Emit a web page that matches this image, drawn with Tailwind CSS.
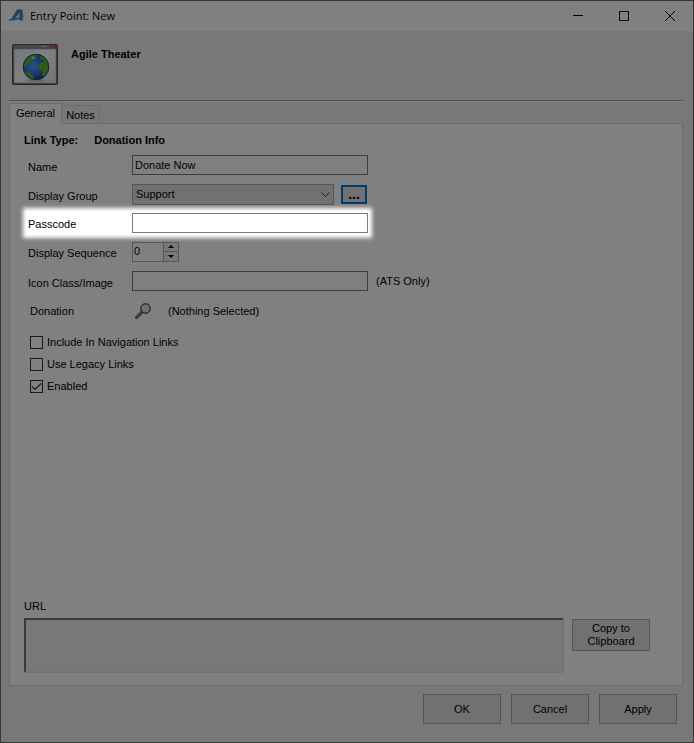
<!DOCTYPE html>
<html lang="en">
<head>
  <meta charset="UTF-8" />
  <meta name="viewport" content="width=device-width, initial-scale=1.0" />
  <title>Entry Point: New</title>

  <!-- Tailwind CSS -->
  <script src="https://cdn.jsdelivr.net/npm/@tailwindcss/browser@4"></script>
</head>
<body class="min-h-screen flex flex-col bg-[#787878] border border-[#353535] text-black text-[11px] leading-[14px] font-['Liberation_Sans',sans-serif]">

  <!-- Title bar -->
  <header class="flex items-center h-[30px] pl-2 bg-[#808080]">
    <svg class="w-4 h-4 mr-[5px]" viewBox="0 0 16 16">
      <path d="M8 1.500h5.500L14 12.500h-3.500L10.300 5 5.500 11.500 1.500 12z" fill="#1f4468" />
      <path d="M0 11.500C5 11.300 10 9.800 13.500 7.500L16 7.500C12 11 6 12.700 0 12.700z" fill="#1f4468" />
    </svg>
    <h1 class="grow font-['Open_Sans',sans-serif]">Entry Point: New</h1>
    <button type="button" aria-label="Minimize" class="w-[46px] h-full flex items-center justify-center">
      <svg class="w-[10px] h-[10px]" viewBox="0 0 10 10"><path d="M0 4.500h10" stroke="#000" /></svg>
    </button>
    <button type="button" aria-label="Maximize" class="w-[46px] h-full flex items-center justify-center">
      <svg class="w-[10px] h-[10px]" viewBox="0 0 10 10"><path d="M.5.5h9v9h-9z" fill="none" stroke="#000" /></svg>
    </button>
    <button type="button" aria-label="Close" class="w-[46px] h-full flex items-center justify-center">
      <svg class="w-[10px] h-[10px]" viewBox="0 0 10 10"><path d="M0 0l10 10M10 0L0 10" stroke="#000" /></svg>
    </button>
  </header>

  <main class="grow flex flex-col pl-2 pr-[10px]">
    <!-- Organization -->
    <div class="flex h-[70px] pt-3 pl-[2px] gap-3 border-b border-[#505050] shadow-[0_1px_0_#808080]">
      <svg class="w-[48px] h-[44px]" viewBox="0 0 48 44">
        <defs>
          <linearGradient id="pane" x1="0" y1="0" x2="1" y2="1">
            <stop offset="0" stop-color="#747779" />
            <stop offset=".5" stop-color="#808080" />
            <stop offset="1" stop-color="#727475" />
          </linearGradient>
          <radialGradient id="sea" cx=".4" cy=".45">
            <stop offset="0" stop-color="#2b5088" />
            <stop offset=".7" stop-color="#1a3868" />
            <stop offset="1" stop-color="#102644" />
          </radialGradient>
          <clipPath id="globe"><circle cx="25" cy="24" r="13" /></clipPath>
        </defs>
        <rect x="1.500" y="1.500" width="45" height="40" rx="1" fill="#3c4246" stroke="#24282b" />
        <path d="M2 2h44v4H2z" fill="#41494f" />
        <path d="M31 3.500h6" stroke="#777" stroke-dasharray="2 1" />
        <path d="M39 3.500h7" stroke="#7a1820" stroke-width="2" stroke-dasharray="3 1" />
        <path d="M3.500 6.500h41v33h-41z" fill="url(#pane)" stroke="#6c7072" />
        <ellipse cx="25" cy="37.500" rx="10" ry="1.500" fill="#666" />
        <circle cx="25" cy="24" r="13" fill="url(#sea)" />
        <g clip-path="url(#globe)" fill="#2f5a1c">
          <path d="M12 24l1-7 4-4 6-2 4 2-4 1 1 2-4 2-2 3-3 1-1 3z" />
          <path d="M29 13l5 1 4 5 1 7-3 4-2 5-3-3 1-4-4-1-1-4 3-4 2 1 1-3-4-1z" />
          <path d="M13 28l5 1 4 3 1 5h-6l-5-6z" />
          <path d="M22 13l3 1-2 2h-3z" fill="#50782e" />
        </g>
        <circle cx="25" cy="24" r="12.700" fill="none" stroke="#10263c" />
      </svg>
      <h2 class="pt-1 font-bold">Agile Theater</h2>
    </div>

    <!-- Tabs -->
    <div role="tablist" class="relative z-10 flex items-end mt-[2px] -mb-px">
      <button type="button" role="tab" aria-selected="true" class="w-[53px] h-[21px] pb-[2px] bg-[#808080] border border-b-0 border-[#6c6c6c]">General</button>
      <button type="button" role="tab" aria-selected="false" class="w-[39px] h-[19px] -ml-px bg-[#787878] border border-[#6c6c6c]">Notes</button>
    </div>

    <form class="grow flex flex-col bg-[#808080] border border-[#6c6c6c] pl-[14px] pr-8 pb-3">
      <div class="flex gap-4 pt-[9px] font-bold">
        <span>Link Type:</span>
        <span>Donation Info</span>
      </div>

      <!-- Fields -->
      <div class="flex flex-col pt-[3px]">
        <div class="flex items-center h-[29px] pl-1">
          <label for="name" class="w-[104px] pt-1">Name</label>
          <input id="name" type="text" value="Donate Now" class="w-[236px] h-5 px-[2px] border border-[#3d3d3d]" />
        </div>

        <div class="flex items-center h-[29px] pl-1 pt-px">
          <label for="group" class="w-[104px] pt-1">Display Group</label>
          <div class="relative w-[202px]">
            <select id="group" class="appearance-none block w-full h-[21px] px-[3px] bg-[#717171] border border-[#575757]">
              <option>Support</option>
            </select>
            <svg class="absolute right-1 top-2 w-[9px] h-[6px] pointer-events-none" viewBox="0 0 9 6"><path d="M.5.5l4 4 4-4" fill="none" stroke="#222" /></svg>
          </div>
          <button type="button" aria-label="Edit display groups" class="ml-[7px] w-[26px] h-[19px] flex items-center justify-center bg-[#717171] border-2 border-[#003c6c] text-[14px] font-bold">...</button>
        </div>

        <div class="flex items-center h-[29px] pl-1">
          <div class="flex items-center h-[24px] -ml-[2px] pl-[2px] pr-px bg-white shadow-[0_0_4px_3px_#fff]">
            <label for="passcode" class="w-[104px] pt-[2px]">Passcode</label>
            <input id="passcode" type="text" class="w-[236px] h-5 px-[2px] bg-white border border-[#7a7a7a]" />
          </div>
        </div>

        <div class="flex items-center h-[29px] pl-1">
          <label for="sequence" class="w-[104px] pt-[2px]">Display Sequence</label>
          <div class="flex w-[47px] h-5 border border-[#575757]">
            <input id="sequence" type="text" value="0" class="w-[30px] px-px pb-[2px]" />
            <div class="flex flex-col w-[15px] border-l border-[#575757] bg-[#787878]">
              <button type="button" aria-label="Increase" class="h-[9px] flex items-center justify-center border-b border-[#575757]">
                <svg class="w-[6px] h-[3px]" viewBox="0 0 6 3"><path d="M0 3l3-3 3 3z" /></svg>
              </button>
              <button type="button" aria-label="Decrease" class="h-[9px] flex items-center justify-center">
                <svg class="w-[6px] h-[3px]" viewBox="0 0 6 3"><path d="M0 0h6L3 3z" /></svg>
              </button>
            </div>
          </div>
        </div>

        <div class="flex items-center h-[29px] pl-1">
          <label for="icon" class="w-[104px] pt-1">Icon Class/Image</label>
          <input id="icon" type="text" class="w-[236px] h-5 px-[2px] border border-[#3d3d3d]" />
          <span class="pl-2">(ATS Only)</span>
        </div>

        <div class="flex items-center h-[29px] pt-[2px] pl-[6px]">
          <span class="w-[105px]">Donation</span>
          <button type="button" aria-label="Find donation" class="w-4 h-4">
            <svg class="w-4 h-4" viewBox="0 0 16 16">
              <path d="M1.500 14.500L6.500 9.500" stroke="#33261a" stroke-width="3" stroke-linecap="round" />
              <path d="M1.500 14L6 9.800" stroke="#5a4228" stroke-width="1.500" stroke-linecap="round" />
              <circle cx="10.500" cy="5.500" r="4.700" fill="#687078" stroke="#2a2e33" stroke-width="1.400" />
              <path d="M7.500 5a3 3 0 0 1 3-2.500" fill="none" stroke="#7a8086" />
            </svg>
          </button>
          <span class="pl-[17px]">(Nothing Selected)</span>
        </div>
      </div>

      <!-- Options -->
      <div class="flex flex-col gap-2 pt-[11px] pl-[6px]">
        <label class="flex items-center gap-1">
          <input type="checkbox" class="appearance-none w-[13px] h-[13px] border border-[#1a1a1a]" />
          Include In Navigation Links
        </label>
        <label class="flex items-center gap-1">
          <input type="checkbox" class="appearance-none w-[13px] h-[13px] border border-[#1a1a1a]" />
          Use Legacy Links
        </label>
        <label class="relative flex items-center gap-1">
          <input type="checkbox" checked class="peer appearance-none w-[13px] h-[13px] border border-[#1a1a1a]" />
          <svg class="absolute left-0 w-[13px] h-[13px] invisible peer-checked:visible" viewBox="0 0 13 13"><path d="M2 6.500L5 9.500l6-6" fill="none" stroke="#1a1a1a" stroke-width="1.200" /></svg>
          Enabled
        </label>
      </div>

      <!-- URL -->
      <div class="mt-auto">
        <label for="url" class="block pb-[5px]">URL</label>
        <div class="flex items-start gap-2">
          <textarea id="url" readonly class="grow h-[55px] resize-none bg-[#787878] border-2 border-t-[#3a3a3a] border-l-[#3a3a3a] border-r-[#747474] border-b-[#747474]"></textarea>
          <button type="button" class="w-[78px] h-8 mt-px leading-[13px] bg-[#717171] border border-[#575757]">Copy to<br />Clipboard</button>
        </div>
      </div>
    </form>

    <!-- Dialog buttons -->
    <footer class="flex justify-end gap-[10px] pt-2 pb-[18px] pr-[6px]">
      <button type="button" class="w-[78px] h-[30px] bg-[#717171] border border-[#575757]">OK</button>
      <button type="button" class="w-[78px] h-[30px] bg-[#717171] border border-[#575757]">Cancel</button>
      <button type="button" class="w-[78px] h-[30px] bg-[#717171] border border-[#575757]">Apply</button>
    </footer>
  </main>
</body>
</html>
